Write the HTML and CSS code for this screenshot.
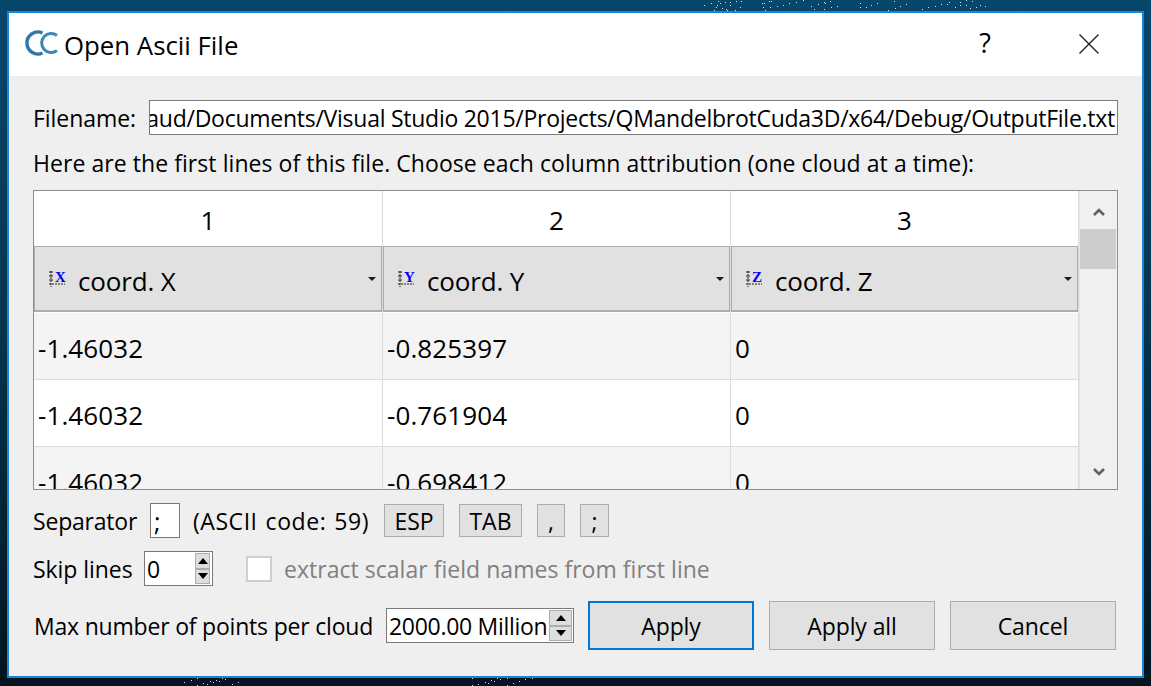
FILE: index.html
```html
<!DOCTYPE html>
<html lang="en">
<head>
<meta charset="utf-8">
<title>Open Ascii File</title>
<link rel="stylesheet" href="styles.css">
</head>
<body>
<div class="stars"></div>
<main class="window">
  <header class="titlebar">
    <svg class="app-icon" width="33" height="28" viewBox="0 0 33 28"><g fill="none" stroke="#2f78a8" stroke-width="3.4"><path d="M17.5 4A11 11 0 1 0 17.5 24"/><path d="M32 6.5A9.5 9.5 0 1 0 32 21.5" stroke="#3d86b5" stroke-width="3"/></g></svg>
    <span class="title">Open Ascii File</span>
    <span class="help">?</span>
    <svg class="close" width="20" height="20" viewBox="0 0 20 20"><path d="M0.5 0.5L19.5 19.5M19.5 0.5L0.5 19.5" stroke="#222" stroke-width="1.4" fill="none"/></svg>
  </header>
  <section class="content">
    <div class="file-row">
      <span class="file-label">Filename:</span>
      <div class="field file-field"><span>aud/Documents/Visual Studio 2015/Projects/QMandelbrotCuda3D/x64/Debug/OutputFile.txt</span></div>
    </div>
    <p class="hint">Here are the first lines of this file. Choose each column attribution (one cloud at a time):</p>
    <div class="table">
      <div class="grid-clip">
        <div class="grid">
          <div class="head">1</div><div class="head">2</div><div class="head">3</div>
          <div class="combo-cell"><div class="combo"><svg class="axis" width="18" height="18" viewBox="0 0 18 18"><use href="#axes"/><text x="7" y="12" class="axis-text">X</text></svg><span>coord. X</span><i class="caret"></i></div></div>
          <div class="combo-cell"><div class="combo"><svg class="axis" width="18" height="18" viewBox="0 0 18 18"><use href="#axes"/><text x="7" y="12" class="axis-text">Y</text></svg><span>coord. Y</span><i class="caret"></i></div></div>
          <div class="combo-cell"><div class="combo"><svg class="axis" width="18" height="18" viewBox="0 0 18 18"><use href="#axes"/><text x="7" y="12" class="axis-text">Z</text></svg><span>coord. Z</span><i class="caret"></i></div></div>
          <div class="cell alt">-1.46032</div><div class="cell alt">-0.825397</div><div class="cell alt">0</div>
          <div class="cell">-1.46032</div><div class="cell">-0.761904</div><div class="cell">0</div>
          <div class="cell alt">-1.46032</div><div class="cell alt">-0.698412</div><div class="cell alt">0</div>
        </div>
      </div>
      <div class="scrollbar">
        <svg class="sb-arrow" width="12" height="8" viewBox="0 0 12 8"><path d="M1 7L6 2L11 7" fill="none" stroke="#606060" stroke-width="2.6"/></svg>
        <div class="track"><div class="thumb"></div></div>
        <svg class="sb-arrow" width="12" height="8" viewBox="0 0 12 8"><path d="M1 1L6 6L11 1" fill="none" stroke="#606060" stroke-width="2.6"/></svg>
      </div>
    </div>
    <div class="sep-row">
      <span class="sep-label">Separator</span>
      <div class="field sep-field">;</div>
      <span class="ascii">(ASCII code: 59)</span>
      <button class="mini esp">ESP</button>
      <button class="mini tab">TAB</button>
      <button class="mini comma">,</button>
      <button class="mini semi">;</button>
    </div>
    <div class="skip-row">
      <span class="skip-label">Skip lines</span>
      <div class="field spin skip-spin"><span>0</span><div class="spin-btns"><b class="up"></b><b class="down"></b></div></div>
      <i class="check"></i>
      <span class="disabled">extract scalar field names from first line</span>
    </div>
    <div class="max-row">
      <span class="max-label">Max number of points per cloud</span>
      <div class="field spin max-spin"><span>2000.00 Million</span><div class="spin-btns"><b class="up"></b><b class="down"></b></div></div>
      <button class="btn default">Apply</button>
      <button class="btn">Apply all</button>
      <button class="btn">Cancel</button>
    </div>
  </section>
</main>
<svg class="defs" width="0" height="0"><defs><g id="axes"><path d="M3 1V17M1 14H17" fill="none" stroke="#222" stroke-width="1" stroke-dasharray="2 1"/><path d="M1 2H5M1 6H5M1 10H5" fill="none" stroke="#222" stroke-width="1"/></g></defs></svg>
</body>
</html>
```
FILE: styles.css
```css
* { box-sizing: border-box; }
html, body { margin: 0; height: 100%; }
body {
  width: 1151px; height: 686px; overflow: hidden; position: relative;
  padding: 11px 7px 8px 7px;
  background: linear-gradient(180deg, #07476c 0%, #053650 45%, #02151f 100%);
  font-family: "Open Sans", "Noto Sans", sans-serif;
  font-size: 23px; color: #000; white-space: nowrap;
}
.defs { position: absolute; }
.window {
  width: 1137px; height: 667px; border: 2px solid #1c84d8;
  display: flex; flex-direction: column; background: #efefef;
  position: relative;
}
.titlebar {
  height: 63px; background: #fff; flex: none;
  display: flex; align-items: center; padding-left: 16px;
}
.app-icon { flex: none; filter: blur(0.5px); margin-top: -4px; }
.title { margin-left: 6px; font-size: 25.8px; }
.help { margin-left: auto; margin-right: 88px; font-size: 27px; margin-top: -5px; }
.close { margin-right: 43px; margin-top: -2px; }
.content { flex: 1; padding: 24px 24px 0 24px; display: flex; flex-direction: column; }
.file-row { display: flex; align-items: center; height: 35px; }
.file-label { width: 116px; letter-spacing: -0.05px; flex: none; }
.field { background: #fff; border: 1px solid #7a7a7a; display: flex; align-items: center; overflow: hidden; }
.file-field { width: 969px; height: 35px; justify-content: flex-end; padding-right: 2px; letter-spacing: -0.26px; }
.hint { margin: 10px 0 0 0; height: 45px; line-height: 36px; letter-spacing: 0.06px; }
.table { width: 1085px; height: 300px; border: 1px solid #8c8c94; display: flex; background: #fff; flex: none; }
.grid-clip { width: 1045px; overflow: hidden; font-size: 26px; letter-spacing: 0.1px; }
.grid { display: grid; grid-template-columns: 349px 348px 348px; grid-template-rows: 55px 67px 67px 67px 67px; }
.head { display: flex; align-items: center; justify-content: center; border-right: 1px solid #dcdcdc; padding-top: 3px; }
.combo-cell { padding: 0; border-right: 1px solid #dcdcdc; }
.combo {
  height: 66px; background: #e1e1e1; border: 1px solid #adadad; border-width: 1px 1px 2px 1px;
  display: flex; align-items: center; padding: 4px 0 0 13px; position: relative; letter-spacing: -0.15px;
}
.axis { margin: -3px 12px 0 0; flex: none; overflow: visible; }
.axis-text { font-family: "Liberation Serif", serif; font-size: 15px; font-weight: 700; fill: #0000f0; letter-spacing: 0; }
.caret { position: absolute; right: 5px; top: 30px; border: 4px solid transparent; border-top-color: #1a1a1a; border-bottom: 0; }
.cell { border-right: 1px solid #dcdcdc; border-bottom: 1px solid #dcdcdc; display: flex; align-items: center; padding: 4px 0 0 4px; background: #fff; }
.cell.alt { background: #f4f4f4; }
.scrollbar { width: 38px; background: #f0f0f0; border-left: 1px solid #e4e4e4; display: flex; flex-direction: column; align-items: center; }
.sb-arrow { flex: none; margin: 17px 0 13px; }
.track { flex: 1; width: 100%; }
.thumb { height: 40px; width: 36px; background: #cdcdcd; }
.sep-row { display: flex; align-items: center; height: 35px; margin-top: 13px; }
.sep-label { width: 117px; flex: none; letter-spacing: -0.2px; }
.sep-field { width: 30px; height: 35px; padding-left: 3px; font-size: 25px; }
.ascii { margin-left: 13px; width: 191px; flex: none; letter-spacing: 0.55px; word-spacing: 1.5px; }
.mini { font: inherit; height: 33px; padding: 0; background: #e1e1e1; border: 1px solid #adadad; color: #000; }
.esp { width: 60px; }
.tab { width: 63px; margin-left: 15px; }
.comma { width: 28px; margin-left: 15px; }
.semi { width: 29px; margin-left: 15px; }
.skip-row { display: flex; align-items: center; height: 35px; margin-top: 13px; }
.skip-label { width: 111px; flex: none; letter-spacing: -0.05px; }
.spin { justify-content: space-between; padding-left: 2px; height: 35px; padding-right: 1px; }
.skip-spin { width: 69px; padding-right: 2px; }
.spin-btns { width: 15px; height: 31px; display: flex; flex-direction: column; flex: none; }
.max-spin .spin-btns { width: 23px; }
.spin-btns b { flex: 1; background: #dedede; border: 1px solid #adadad; display: flex; align-items: center; justify-content: center; }
.spin-btns .up::after { content: ""; border: 5px solid transparent; border-bottom: 6px solid #000; border-top: 0; }
.spin-btns .down::after { content: ""; border: 5px solid transparent; border-top: 6px solid #000; border-bottom: 0; }
.check { width: 26px; height: 26px; background: #fff; border: 2px solid #cfcfcf; margin-left: 33px; flex: none; }
.disabled { color: #808080; margin-left: 12px; letter-spacing: 0.03px; }
.max-row { display: flex; align-items: center; height: 49px; margin-top: 15px; }
.max-label { margin-left: 1px; width: 352px; flex: none; letter-spacing: -0.2px; }
.max-spin { width: 188px; letter-spacing: -0.3px; }
.btn { font: inherit; width: 166px; height: 49px; background: #e1e1e1; border: 1px solid #adadad; margin-left: 15px; padding: 0; color: #000; letter-spacing: -0.1px; }
.btn.default { border: 2px solid #0078d7; margin-left: 14px; }
.stars {
  position: absolute; left: 0; top: 0; width: 1px; height: 1px;
  box-shadow:
    704px 5px #cfe4f0, 711px 3px #cfe4f0, 717px 5px #cfe4f0, 718px 1px #cfe4f0, 720px 3px #cfe4f0, 725px 2px #cfe4f0,
    730px 2px #cfe4f0, 736px 1px #cfe4f0, 741px 1px #cfe4f0, 716px 7px #cfe4f0, 722px 8px #cfe4f0, 726px 9px #cfe4f0,
    730px 5px #cfe4f0, 740px 7px #cfe4f0, 714px 10px #cfe4f0, 727px 10px #cfe4f0, 735px 10px #cfe4f0, 762px 3px #cfe4f0,
    764px 3px #cfe4f0, 769px 1px #cfe4f0, 771px 1px #cfe4f0, 763px 7px #cfe4f0, 770px 7px #cfe4f0, 777px 6px #cfe4f0,
    783px 5px #cfe4f0, 789px 3px #cfe4f0, 796px 2px #cfe4f0, 803px 0 #cfe4f0, 811px 6px #cfe4f0, 818px 4px #cfe4f0,
    824px 2px #cfe4f0, 830px 1px #cfe4f0, 825px 3px #cfe4f0, 831px 7px #cfe4f0, 837px 6px #cfe4f0, 860px 3px #cfe4f0,
    860px 7px #cfe4f0, 866px 7px #cfe4f0, 871px 5px #cfe4f0, 877px 3px #cfe4f0, 894px 1px #cfe4f0, 895px 8px #cfe4f0,
    900px 6px #cfe4f0, 906px 4px #cfe4f0, 922px 9px #cfe4f0, 928px 7px #cfe4f0, 935px 6px #cfe4f0, 941px 4px #cfe4f0,
    947px 4px #cfe4f0, 949px 2px #cfe4f0, 955px 7px #cfe4f0, 960px 2px #cfe4f0, 960px 5px #cfe4f0, 966px 5px #cfe4f0,
    972px 1px #cfe4f0, 966px 0 #cfe4f0, 970px 8px #cfe4f0, 976px 7px #cfe4f0, 980px 5px #cfe4f0, 985px 6px #cfe4f0,
    824px 9px #cfe4f0, 765px 10px #cfe4f0, 888px 10px #cfe4f0, 814px 9px #cfe4f0,
    184px 682px #cfe4f0, 191px 680px #cfe4f0, 197px 678px #cfe4f0, 197px 685px #cfe4f0, 203px 683px #cfe4f0, 207px 684px #cfe4f0,
    210px 681px #cfe4f0, 213px 682px #cfe4f0, 216px 680px #cfe4f0, 219px 681px #cfe4f0, 222px 678px #cfe4f0, 225px 679px #cfe4f0,
    232px 684px #cfe4f0, 238px 682px #cfe4f0,
    472px 678px #cfe4f0, 472px 685px #cfe4f0, 478px 684px #cfe4f0, 485px 682px #cfe4f0, 488px 683px #cfe4f0, 491px 680px #cfe4f0,
    494px 681px #cfe4f0, 497px 678px #cfe4f0, 500px 679px #cfe4f0, 507px 678px #cfe4f0, 507px 685px #cfe4f0, 513px 683px #cfe4f0,
    519px 681px #cfe4f0, 525px 679px #cfe4f0, 532px 678px #cfe4f0;
}
```
